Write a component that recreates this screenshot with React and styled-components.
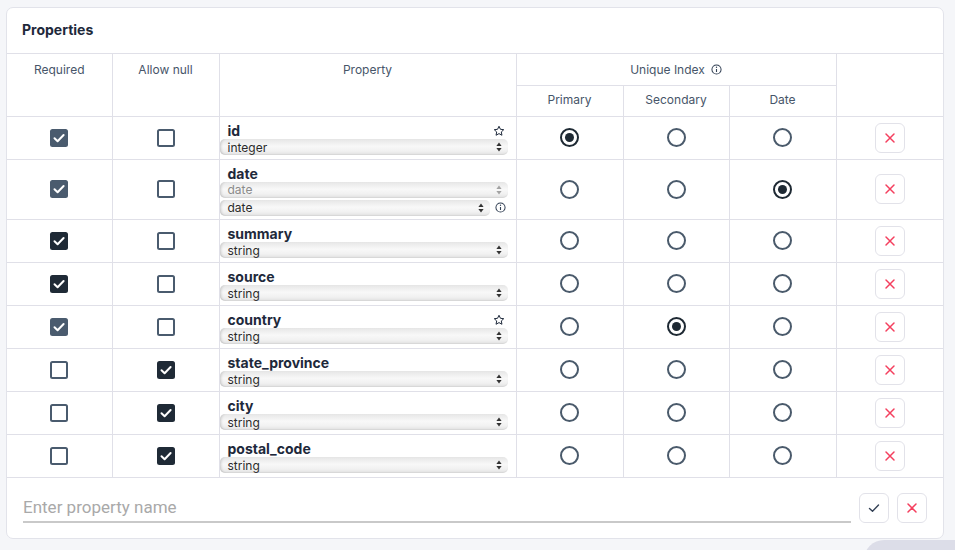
import React from "react";
import styled, { createGlobalStyle } from "styled-components";

const properties = [
  { name: "id", required: "locked", allowNull: false, type: "integer", star: true, index: "primary" },
  { name: "date", required: "locked", allowNull: false, type: "date", dateFormat: "date", index: "date" },
  { name: "summary", required: "on", allowNull: false, type: "string" },
  { name: "source", required: "on", allowNull: false, type: "string" },
  { name: "country", required: "locked", allowNull: false, type: "string", star: true, index: "secondary" },
  { name: "state_province", required: "off", allowNull: true, type: "string" },
  { name: "city", required: "off", allowNull: true, type: "string" },
  { name: "postal_code", required: "off", allowNull: true, type: "string" },
];

const indexKinds = ["primary", "secondary", "date"];

const CheckIcon = () => (
  <svg width="18" height="18" viewBox="0 0 18 18">
    <polyline points="4.5,9.2 7.6,12.2 13.6,6" fill="none" stroke="#fff" strokeWidth="2" strokeLinecap="round" strokeLinejoin="round" />
  </svg>
);

const StarIcon = () => (
  <svg width="12" height="12" viewBox="0 0 24 24">
    <polygon
      points="12,2.5 14.9,8.6 21.5,9.4 16.6,13.9 17.9,20.5 12,17.2 6.1,20.5 7.4,13.9 2.5,9.4 9.1,8.6"
      fill="none"
      stroke="#1e293b"
      strokeWidth="2"
      strokeLinejoin="round"
    />
  </svg>
);

const InfoIcon = () => (
  <svg width="11" height="11" viewBox="0 0 12 12">
    <circle cx="6" cy="6" r="5" fill="none" stroke="#334155" strokeWidth="1.1" />
    <line x1="6" y1="5.4" x2="6" y2="8.8" stroke="#334155" strokeWidth="1.2" />
    <circle cx="6" cy="3.5" r="0.75" fill="#334155" />
  </svg>
);

const UpDown = ({ muted }) => (
  <svg width="6" height="10" viewBox="0 0 6 10">
    <polygon points="3,0.5 5.6,4 0.4,4" fill={muted ? "#a3a3a3" : "#333"} />
    <polygon points="3,9.5 5.6,6 0.4,6" fill={muted ? "#a3a3a3" : "#333"} />
  </svg>
);

const CrossIcon = () => (
  <svg width="12" height="12" viewBox="0 0 12 12">
    <path d="M2 2 L10 10 M10 2 L2 10" stroke="#f43f5e" strokeWidth="1.5" strokeLinecap="round" />
  </svg>
);

const TickIcon = () => (
  <svg width="12" height="12" viewBox="0 0 12 12">
    <polyline points="1.5,6.5 4.5,9.3 10.5,3" fill="none" stroke="#334155" strokeWidth="1.4" strokeLinecap="round" strokeLinejoin="round" />
  </svg>
);

const Select = ({ value, muted }) => (
  <SelectBox $muted={muted}>
    <span>{value}</span>
    <UpDown muted={muted} />
  </SelectBox>
);

const App = () => {
  return (
    <>
      <GlobalStyle />
      <Page>
        <Card>
          <TitleBar>Properties</TitleBar>
          <Table>
            <colgroup>
              <col style={{ width: 105 }} />
              <col style={{ width: 107 }} />
              <col style={{ width: 297 }} />
              <col style={{ width: 107 }} />
              <col style={{ width: 106 }} />
              <col style={{ width: 107 }} />
              <col style={{ width: 107 }} />
            </colgroup>
            <thead>
              <HeadRow $h={31}>
                <Th rowSpan={2}>Required</Th>
                <Th rowSpan={2}>Allow null</Th>
                <Th rowSpan={2}>Property</Th>
                <Th colSpan={3}>
                  <HeadLabel>
                    Unique Index <InfoIcon />
                  </HeadLabel>
                </Th>
                <Th rowSpan={2} />
              </HeadRow>
              <HeadRow $h={31}>
                <Th $sub>Primary</Th>
                <Th $sub>Secondary</Th>
                <Th $sub>Date</Th>
              </HeadRow>
            </thead>
            <tbody>
              {properties.map((p) => (
                <BodyRow key={p.name} $h={p.dateFormat ? 60 : 43}>
                  <Td>
                    <Checkbox $state={p.required}>
                      {p.required !== "off" && <CheckIcon />}
                    </Checkbox>
                  </Td>
                  <Td>
                    <Checkbox $state={p.allowNull ? "on" : "off"}>
                      {p.allowNull && <CheckIcon />}
                    </Checkbox>
                  </Td>
                  <PropertyCell>
                    <NameRow>
                      <Name>{p.name}</Name>
                      {p.star && <StarIcon />}
                    </NameRow>
                    {p.dateFormat ? (
                      <>
                        <Select value={p.type} muted />
                        <SelectLine>
                          <Select value={p.dateFormat} />
                          <InfoIcon />
                        </SelectLine>
                      </>
                    ) : (
                      <Select value={p.type} />
                    )}
                  </PropertyCell>
                  {indexKinds.map((k) => (
                    <Td key={k}>
                      <Radio $checked={p.index === k} />
                    </Td>
                  ))}
                  <Td>
                    <IconButton>
                      <CrossIcon />
                    </IconButton>
                  </Td>
                </BodyRow>
              ))}
            </tbody>
          </Table>
          <Footer>
            <NameInput placeholder="Enter property name" />
            <IconButton>
              <TickIcon />
            </IconButton>
            <IconButton>
              <CrossIcon />
            </IconButton>
          </Footer>
        </Card>
        <FloatingBlob />
      </Page>
    </>
  );
};

export default App;

const GlobalStyle = createGlobalStyle`
  body {
    margin: 0;
    background: #f5f6f9;
    font-family: Inter, "Noto Sans", sans-serif;
    color: #1e293b;
  }
`;

const Page = styled.div`
  padding: 7px 0 0 6px;
  height: 543px;
  overflow: hidden;
`;

const Card = styled.div`
  width: 938px;
  box-sizing: border-box;
  background: #fff;
  border: 1px solid #e2e3ea;
  border-radius: 7px;
  overflow: hidden;
`;

const TitleBar = styled.div`
  display: flex;
  align-items: center;
  padding: 0 0 2px 15px;
  font-size: 14px;
  font-weight: 700;
  color: #1e293b;
  border-bottom: 1px solid #e0e0e8;
  box-sizing: border-box;
  height: 46px;
`;

const Table = styled.table`
  width: 936px;
  table-layout: fixed;
  border-collapse: collapse;
  border-style: hidden;
`;

const HeadRow = styled.tr`
  height: ${(p) => p.$h}px;
`;

const BodyRow = styled.tr`
  height: ${(p) => p.$h}px;
`;

const Th = styled.th`
  border: 1px solid #e0e0e8;
  padding: ${(p) => (p.$sub ? "6px" : "8px")} 4px 0;
  vertical-align: top;
  font-size: 12px;
  font-weight: 400;
  color: #475569;
  line-height: 15px;
`;

const HeadLabel = styled.span`
  display: inline-flex;
  align-items: center;
  gap: 6px;
`;

const Td = styled.td`
  border: 1px solid #e0e0e8;
  padding: 0;
  text-align: center;
  vertical-align: middle;
`;

const PropertyCell = styled.td`
  border: 1px solid #e0e0e8;
  padding: 2px 8px 0 0;
  vertical-align: middle;
`;

const NameRow = styled.div`
  display: flex;
  align-items: center;
  justify-content: space-between;
  padding: 0 3px 0 8px;
  height: 17px;
`;

const Name = styled.span`
  font-size: 14px;
  font-weight: 700;
  color: #1e293b;
`;

const SelectLine = styled.div`
  display: flex;
  align-items: center;
  gap: 5px;
  margin-top: 2px;
  padding-right: 2px;

  & > div {
    flex: 1;
  }
`;

const SelectBox = styled.div`
  height: 16px;
  display: flex;
  align-items: center;
  justify-content: space-between;
  padding: 0 6px 0 8px;
  border-radius: 5px;
  font-size: 12px;
  color: ${(p) => (p.$muted ? "#8b8b8b" : "#2b2b2b")};
  background: linear-gradient(180deg, #e6e6e6 0%, #f8f8f8 45%, #f1f1f1 75%, #e1e1e1 100%);
  box-shadow: inset 3px 0 3px -2px rgba(0, 0, 0, 0.18), inset 0 -1px 1px rgba(0, 0, 0, 0.05);
`;

const Checkbox = styled.div`
  width: 18px;
  height: 18px;
  box-sizing: border-box;
  margin: 0 auto;
  border-radius: 2.5px;
  display: flex;
  align-items: center;
  justify-content: center;
  background: ${(p) => (p.$state === "on" ? "#1f2a36" : p.$state === "locked" ? "#4a5b6e" : "#fff")};
  border: ${(p) => (p.$state === "off" ? "2px solid #4a5b6e" : "none")};
`;

const Radio = styled.div`
  width: 19px;
  height: 19px;
  box-sizing: border-box;
  margin: 0 auto;
  border-radius: 50%;
  border: 2px solid ${(p) => (p.$checked ? "#1e2933" : "#4a5a6b")};
  display: flex;
  align-items: center;
  justify-content: center;

  &::after {
    content: "";
    display: ${(p) => (p.$checked ? "block" : "none")};
    width: 9px;
    height: 9px;
    border-radius: 50%;
    background: #1e2933;
  }
`;

const IconButton = styled.button`
  width: 30px;
  height: 30px;
  margin: 0 auto;
  padding: 0;
  display: flex;
  align-items: center;
  justify-content: center;
  background: #fff;
  border: 1px solid #e2e2e9;
  border-radius: 6px;
  cursor: pointer;
`;

const Footer = styled.div`
  display: flex;
  align-items: center;
  gap: 8px;
  padding: 15px 16px 15px 16px;
  border-top: 1px solid #e0e0e8;

  & > button {
    margin: 0;
    flex-shrink: 0;
  }
`;

const NameInput = styled.input`
  flex: 1;
  height: 29px;
  box-sizing: border-box;
  border: none;
  border-bottom: 2px solid #c9c9c9;
  outline: none;
  padding: 0 0 2px 0;
  margin-top: 1px;
  font-family: Roboto, "Liberation Sans", sans-serif;
  font-size: 17px;
  color: #333;

  &::placeholder {
    color: #a9a9a9;
  }
`;

const FloatingBlob = styled.div`
  position: fixed;
  left: 864px;
  top: 540px;
  width: 200px;
  height: 80px;
  border-radius: 20px;
  background: #dcdde8;
`;
